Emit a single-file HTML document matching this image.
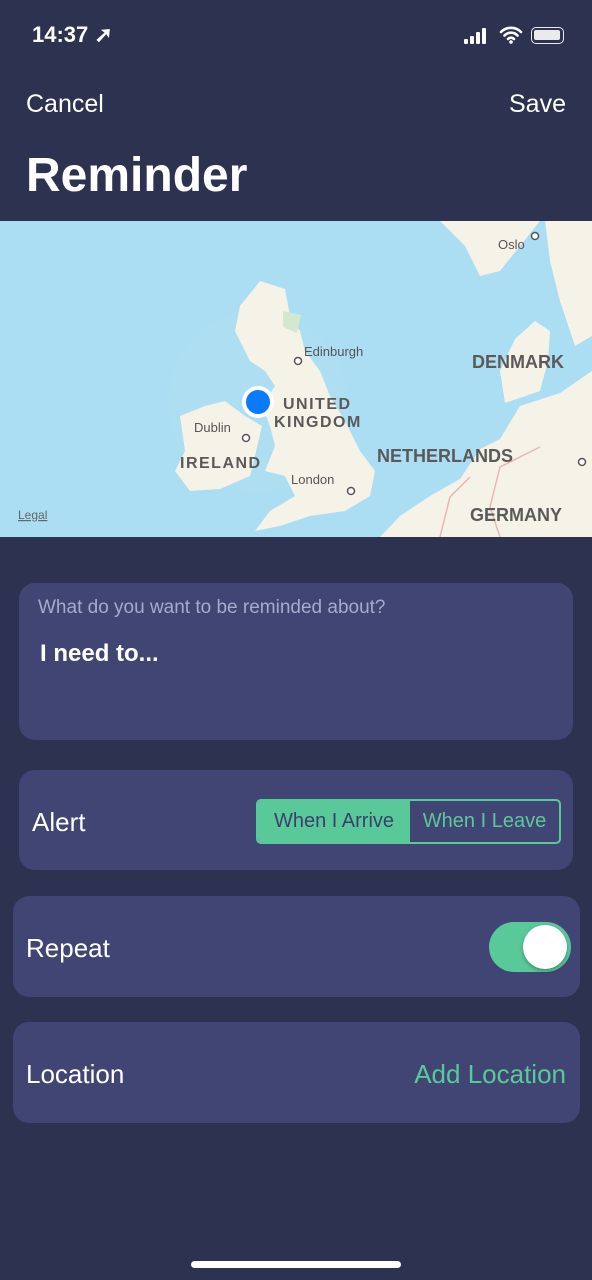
<!DOCTYPE html>
<html><head><meta charset="utf-8"><style>
*{margin:0;padding:0;box-sizing:border-box}
body{width:592px;height:1280px;background:#2c324f;font-family:"Liberation Sans",sans-serif;color:#fff;position:relative;overflow:hidden}
.a{position:absolute}
.card{position:absolute;background:#414574;border-radius:16px}
</style></head><body>
<div class="a" style="left:32px;top:22px;font-size:22px;font-weight:bold">14:37 ➚</div>
<div class="a" style="left:464px;top:28px;width:28px;height:16px">
<div class="a" style="left:0;top:11px;width:4px;height:5px;background:#fff;border-radius:1px"></div>
<div class="a" style="left:6px;top:8px;width:4px;height:8px;background:#fff;border-radius:1px"></div>
<div class="a" style="left:12px;top:4px;width:4px;height:12px;background:#fff;border-radius:1px"></div>
<div class="a" style="left:18px;top:0;width:4px;height:16px;background:#fff;border-radius:1px"></div></div>
<svg class="a" style="left:499px;top:26px" width="24" height="18" viewBox="0 0 24 18"><path d="M2 6a14 14 0 0 1 20 0M5.5 9.5a9 9 0 0 1 13 0M9 13a4 4 0 0 1 6 0" stroke="#fff" stroke-width="2.6" fill="none" stroke-linecap="round"/><circle cx="12" cy="16" r="1.8" fill="#fff"/></svg>
<div class="a" style="left:531px;top:27px;width:33px;height:17px;border:1.5px solid #fff;border-radius:5px;opacity:.9"><div style="margin:2px;width:26px;height:10px;background:#fff;border-radius:2px"></div></div>
<div class="a" style="left:26px;top:90px;font-size:25px">Cancel</div>
<div class="a" style="left:509px;top:90px;font-size:25px">Save</div>
<div class="a" style="left:26px;top:148px;font-size:48px;font-weight:bold">Reminder</div>
<svg class="a" style="left:0;top:221px" width="592" height="316" viewBox="0 0 592 316">
<rect width="592" height="316" fill="#abdef3"/>
<circle cx="258" cy="181" r="90" fill="#b3dff0" opacity=".35"/>
<path d="M240 85L260 60L285 68L290 95L300 110L305 130L320 150L330 175L345 200L360 230L375 250L370 275L345 290L310 295L280 305L255 310L270 290L295 275L285 255L265 250L275 225L270 205L262 185L275 165L265 150L250 140L235 110Z" fill="#f5f2e7"/>
<path d="M180 195L205 185L225 180L245 195L262 205L255 235L250 255L220 268L190 270L175 250L185 230Z" fill="#f5f2e7"/>
<path d="M380 316L400 295L430 275L460 258L480 228L500 218L520 185L560 172L592 150V316Z" fill="#f5f2e7"/>
<path d="M505 182L500 150L515 118L535 100L550 110L548 140L540 170Z" fill="#f5f2e7"/>
<path d="M440 0L465 25L480 55L500 50L520 25L540 0Z" fill="#f5f2e7"/>
<path d="M545 0H592V115L575 125L560 80L550 40Z" fill="#f5f2e7"/>
<path d="M283 90l18 4-4 18-14-6z" fill="#d4e7cf"/>
<path d="M440 316l10-40 20-20M500 316l-10-30 10-40 40-20" stroke="#e8b8b0" stroke-width="1.5" fill="none"/>
<g font-family="Liberation Sans" fill="#555" font-size="13"><text x="304" y="135">Edinburgh</text><text x="194" y="211">Dublin</text><text x="291" y="263">London</text><text x="498" y="28">Oslo</text>
<g font-weight="bold" font-size="16" fill="#5a5a5a" letter-spacing="1.5"><text x="283" y="188">UNITED</text><text x="274" y="206">KINGDOM</text><text x="180" y="247">IRELAND</text></g>
<g font-weight="bold" font-size="18" fill="#5a5a5a"><text x="472" y="147">DENMARK</text><text x="377" y="241">NETHERLANDS</text><text x="470" y="300">GERMANY</text></g>
<text x="18" y="298" font-size="12" text-decoration="underline" fill="#666">Legal</text></g>
<g fill="#fff" stroke="#555" stroke-width="1.5"><circle cx="298" cy="140" r="3.5"/><circle cx="246" cy="217" r="3.5"/><circle cx="351" cy="270" r="3.5"/><circle cx="535" cy="15" r="3.5"/><circle cx="582" cy="241" r="3.5"/></g>
<circle cx="258" cy="181" r="16" fill="#fff"/><circle cx="258" cy="181" r="12" fill="#0a7bff"/>
</svg>
<div class="card" style="left:19px;top:583px;width:554px;height:157px"></div>
<div class="a" style="left:38px;top:597px;font-size:19px;color:#a7aacb">What do you want to be reminded about?</div>
<div class="a" style="left:40px;top:640px;font-size:24px;font-weight:bold">I need to...</div>
<div class="card" style="left:19px;top:770px;width:554px;height:100px"></div>
<div class="a" style="left:32px;top:807px;font-size:26px">Alert</div>
<div class="a" style="left:256px;top:799px;width:305px;height:45px;border:2px solid #5ac99a;border-radius:5px;overflow:hidden;font-size:20px">
<div class="a" style="left:0;top:0;width:152px;height:41px;background:#5ac99a;color:#3b3f6b;text-align:center;line-height:41px">When I Arrive</div>
<div class="a" style="left:152px;top:0;width:149px;height:41px;color:#5ac99a;text-align:center;line-height:41px">When I Leave</div></div>
<div class="card" style="left:13px;top:896px;width:567px;height:101px"></div>
<div class="a" style="left:26px;top:933px;font-size:26px">Repeat</div>
<div class="a" style="left:489px;top:922px;width:82px;height:50px;border-radius:25px;background:#5ac99a"><div class="a" style="left:34px;top:3px;width:44px;height:44px;border-radius:50%;background:#fff;box-shadow:0 2px 4px rgba(0,0,0,.3)"></div></div>
<div class="card" style="left:13px;top:1022px;width:567px;height:101px"></div>
<div class="a" style="left:26px;top:1059px;font-size:26px">Location</div>
<div class="a" style="right:26px;top:1059px;font-size:26px;color:#5ac99a">Add Location</div>
<div class="a" style="left:191px;top:1261px;width:210px;height:7px;border-radius:4px;background:#fff"></div>
</body></html>
